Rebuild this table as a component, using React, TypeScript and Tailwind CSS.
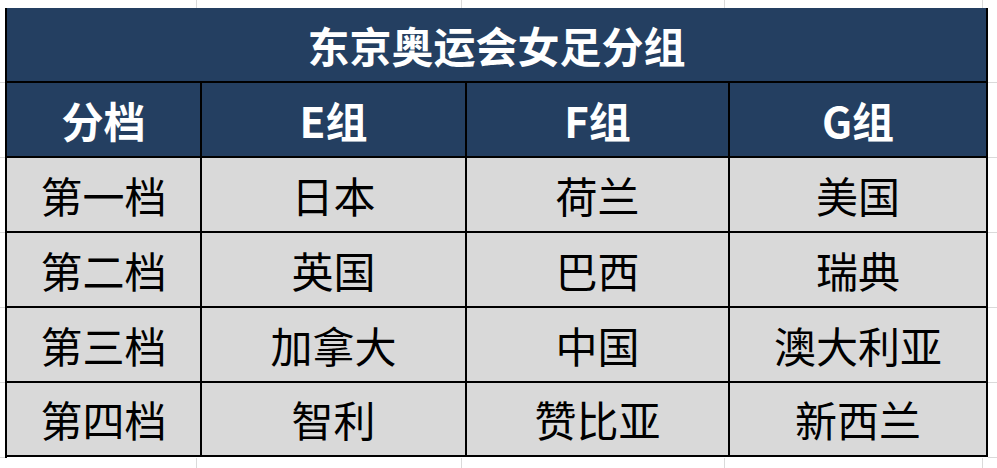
import React from 'react';

const cols = ["w-[195px]", "w-[265px]", "w-[263px]", "w-[258px]"];

const header = ["分档", "E组", "F组", "G组"];

const rows = [
  ["第一档", "日本", "荷兰", "美国"],
  ["第二档", "英国", "巴西", "瑞典"],
  ["第三档", "加拿大", "中国", "澳大利亚"],
  ["第四档", "智利", "赞比亚", "新西兰"],
];

// faint spreadsheet gridlines around the table
const GridStrip = ({ h }: { h: string }) => (
  <div className={`flex ${h}`}>
    <div className="w-[197px] shrink-0 border-r border-[#dadada]" />
    <div className="w-[265px] shrink-0 border-r border-[#dadada]" />
    <div className="w-[263px] shrink-0 border-r border-[#dadada]" />
    <div className="w-[258px] shrink-0 border-r border-[#dadada]" />
  </div>
);

const SideStrip = () => (
  <div className="flex flex-col">
    {[0, 1, 2, 3, 4, 5].map((i) => (
      <div key={i} className="h-[75px] shrink-0 border-b border-[#dadada]" />
    ))}
  </div>
);

const App = () => {
  return (
    <div
      className="w-[997px] h-[468px] overflow-hidden bg-white"
      style={{ fontFamily: '"Noto Sans CJK SC", "Noto Sans", sans-serif' }}
    >
      <GridStrip h="h-[8px]" />
      <div className="flex">
        <div className="w-[5px] shrink-0">
          <SideStrip />
        </div>

        {/* Table */}
        <div className="w-[983px] shrink-0 border-l-2 border-black">
          <div className="h-[75px] flex items-center justify-center bg-[#243f61] border-b-2 border-r-2 border-black text-white font-bold text-[42px] leading-none">
            东京奥运会女足分组
          </div>
          <div className="flex">
            {header.map((t, i) => (
              <div
                key={i}
                className={`${cols[i]} h-[75px] shrink-0 flex items-center justify-center bg-[#243f61] border-b-2 border-r-2 border-black text-white font-bold text-[42px] leading-none`}
              >
                {t}
              </div>
            ))}
          </div>
          {rows.map((r, ri) => (
            <div key={ri} className="flex">
              {r.map((t, i) => (
                <div
                  key={i}
                  className={`${cols[i]} ${ri === 3 ? "h-[74px]" : "h-[75px]"} shrink-0 flex items-center justify-center bg-[#d9d9d9] border-b-2 border-r-2 border-black text-black text-[42px] leading-none`}
                >
                  {t}
                </div>
              ))}
            </div>
          ))}
        </div>

        <div className="flex-1">
          <SideStrip />
        </div>
      </div>
      <GridStrip h="h-[10px]" />
    </div>
  );
};

export default App;
